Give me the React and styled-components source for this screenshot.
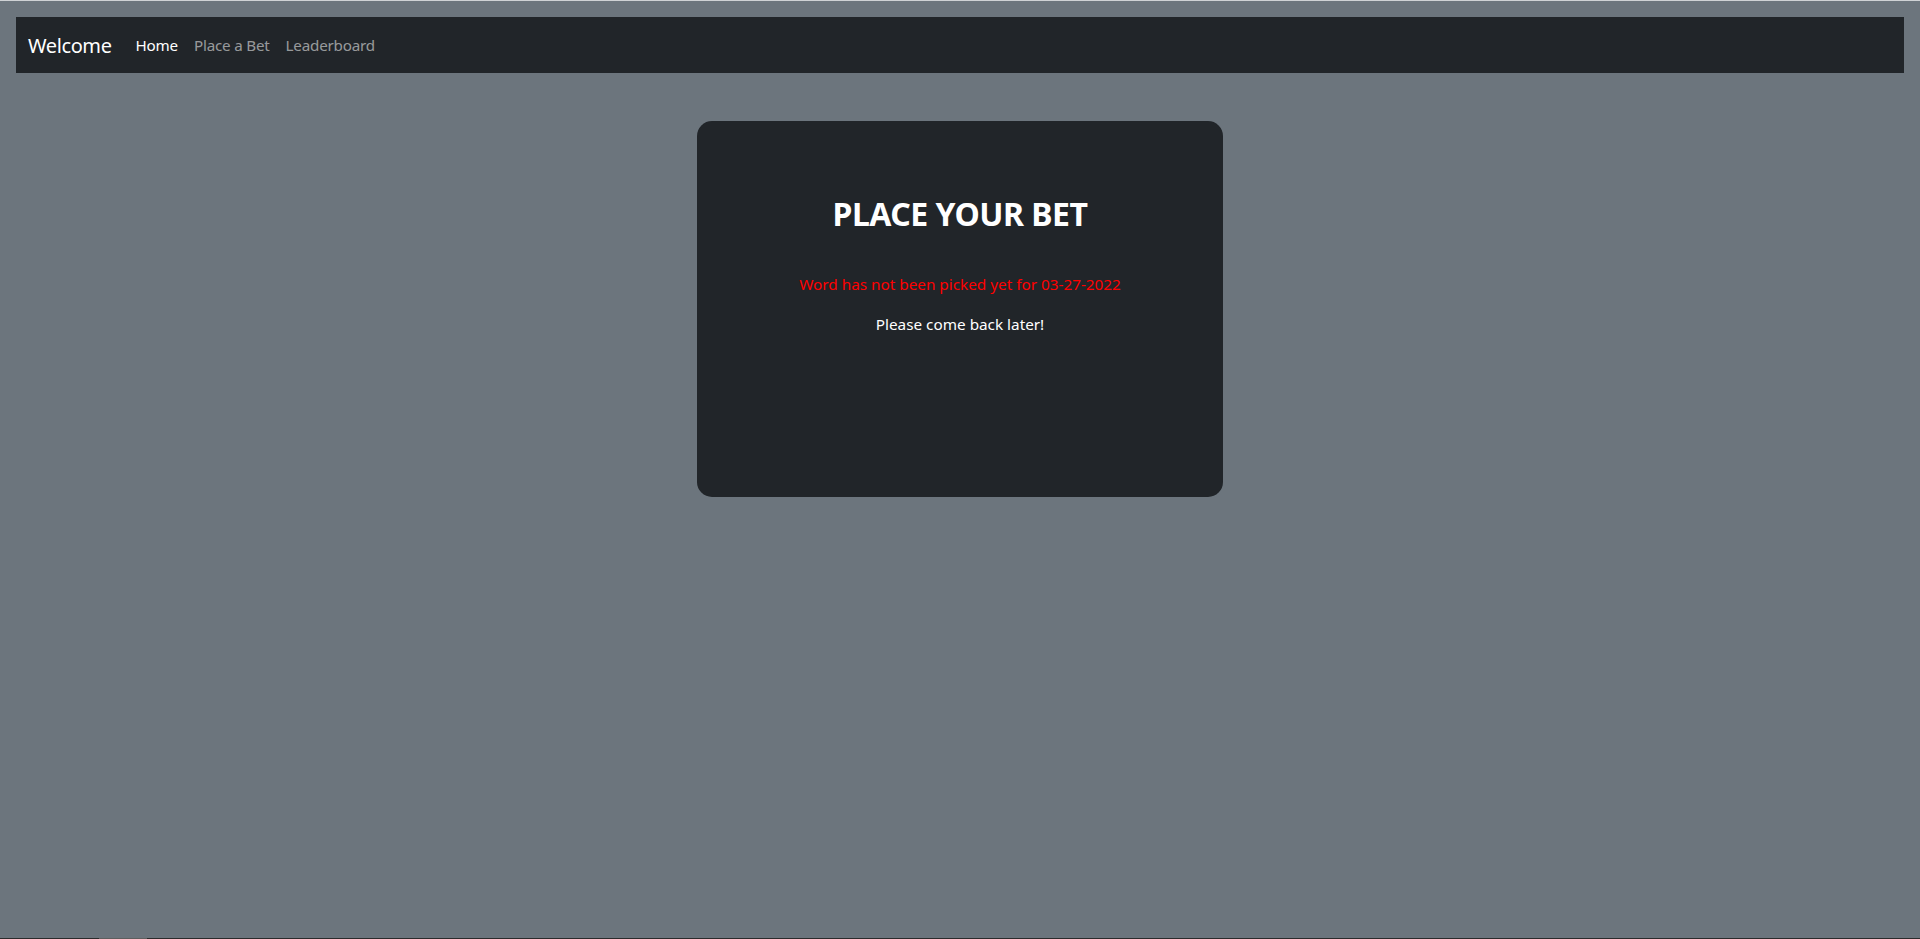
import React from "react";
import styled, { createGlobalStyle } from "styled-components";

const Global = createGlobalStyle`
  html, body { margin: 0; padding: 0; }
  body {
    background: #6c757d;
    font-family: "Noto Sans", "Open Sans", sans-serif;
    color: #fff;
    min-height: 939px;
  }
`;

const Page = styled.div`
  min-height: 939px;
  box-sizing: border-box;
  border-top: 1px solid #cfd2d5;
  padding: 16px 16px 0;
`;

const Navbar = styled.nav`
  background: #212529;
  height: 56px;
  display: flex;
  align-items: center;
  padding: 0 12px;
`;

const Brand = styled.a`
  font-size: 20px;
  color: #fff;
  margin-right: 16px;
  text-decoration: none;
  letter-spacing: -0.4px;
`;

const NavLink = styled.a`
  font-size: 15.2px;
  padding: 8px;
  color: ${(p) => (p.$active ? "#fff" : "rgba(255,255,255,0.55)")};
  text-decoration: none;
  letter-spacing: -0.2px;
`;

const Main = styled.main`
  display: flex;
  justify-content: center;
  padding-top: 48px;
`;

const Card = styled.section`
  width: 526px;
  height: 376px;
  box-sizing: border-box;
  background: #212529;
  border-radius: 15px;
  display: flex;
  flex-direction: column;
  align-items: center;
  padding-top: 74px;
`;

const Title = styled.h2`
  margin: 0 0 39px;
  font-size: 32px;
  font-weight: 700;
  line-height: 1.2;
  letter-spacing: -0.5px;
`;

const Message = styled.p`
  margin: 0 0 16px;
  font-size: 15.3px;
  line-height: 24px;
  color: ${(p) => p.$color || "#fff"};
`;

const BottomBar = styled.div`
  position: fixed;
  left: 0;
  right: 0;
  bottom: 0;
  height: 1px;
  background: #2b2b2b;
`;

const BottomThumb = styled.div`
  position: absolute;
  left: 99px;
  width: 48px;
  height: 1px;
  background: #5e5e5e;
`;

export default function App() {
  return (
    <>
      <Global />
      <Page>
        <Navbar>
          <Brand href="#">Welcome</Brand>
          <NavLink href="#" $active>Home</NavLink>
          <NavLink href="#">Place a Bet</NavLink>
          <NavLink href="#">Leaderboard</NavLink>
        </Navbar>
        <Main>
          <Card>
            <Title>PLACE YOUR BET</Title>
            <Message $color="#ff0000">Word has not been picked yet for 03-27-2022</Message>
            <Message>Please come back later!</Message>
          </Card>
        </Main>
      </Page>
      <BottomBar>
        <BottomThumb />
      </BottomBar>
    </>
  );
}
